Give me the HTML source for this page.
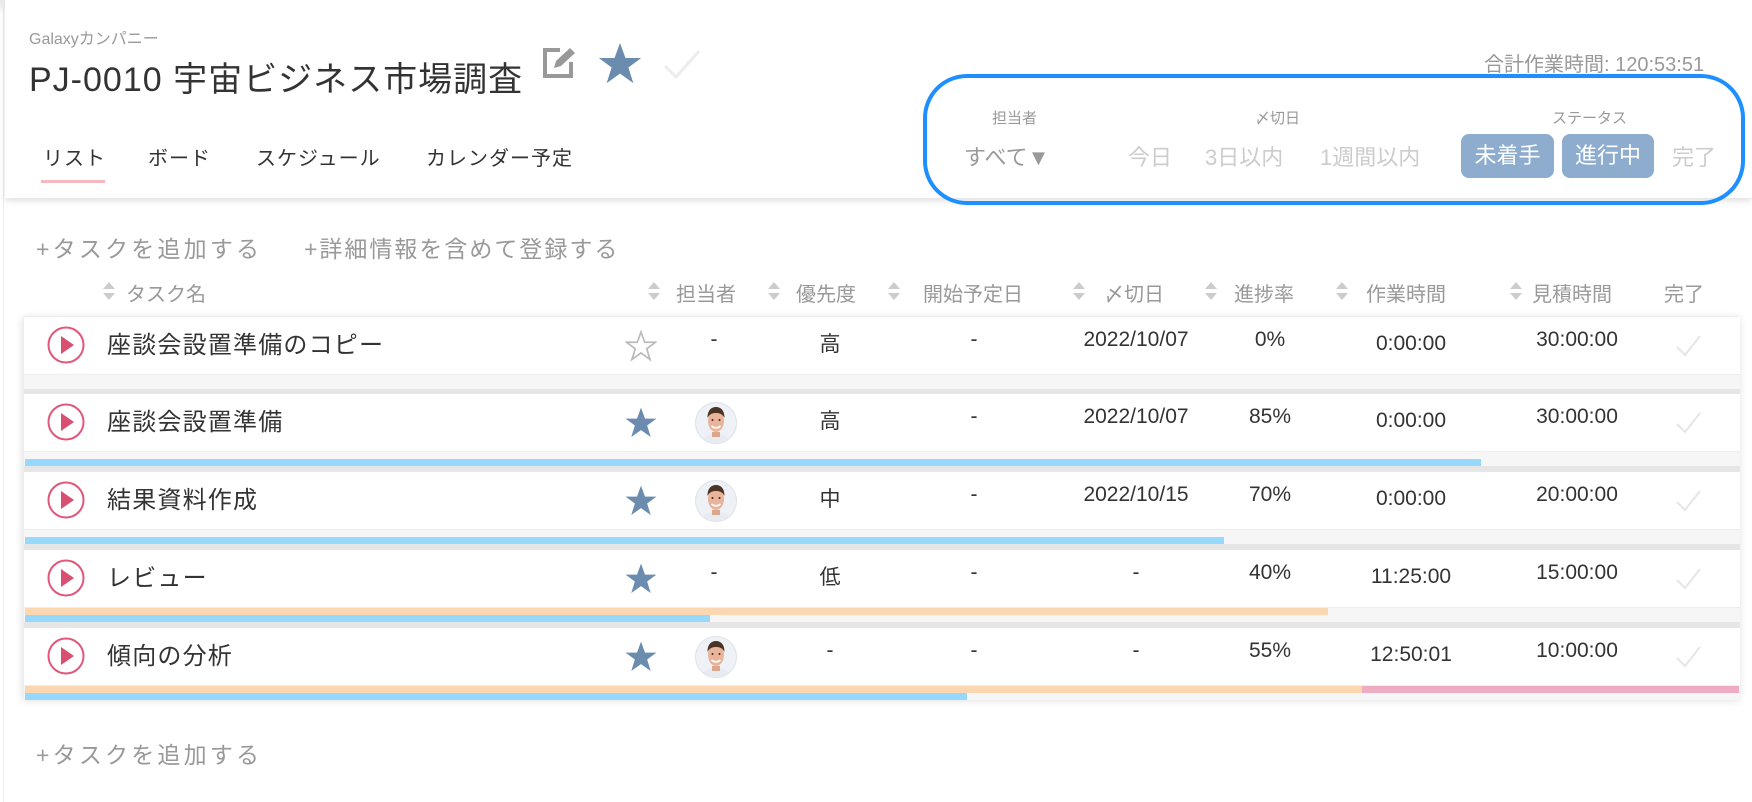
<!DOCTYPE html>
<html><head><meta charset="utf-8"><style>
*{margin:0;padding:0;box-sizing:border-box}
body{width:1752px;height:802px;background:#fff;font-family:"Liberation Sans","Noto Sans CJK JP",sans-serif;position:relative;overflow:hidden;color:#333}
.a{position:absolute;white-space:nowrap}
.hdr{position:absolute;left:5px;top:0;width:1747px;height:198px;background:#fff;box-shadow:0 3px 6px rgba(0,0,0,.12)}
.topsh{position:absolute;left:0;top:0;width:1752px;height:14px;background:linear-gradient(#e6e6e6,#fff)}
.tab{font-size:20px;color:#333;letter-spacing:1px;top:142px}
.ch{font-size:20px;color:#999;top:278px}
.sort{position:absolute;top:281px;width:12px;height:20px}
.card{position:absolute;left:23px;width:1716px;background:#fff}
.row{position:absolute;left:0;width:1716px;height:78px}
.body{position:absolute;left:0;top:0;width:100%;height:57px;background:#fff}
.bars{position:absolute;left:0;top:57px;width:100%;height:15px;background:#f6f6f6;border-top:1px solid #eee}
.sep{position:absolute;left:0;top:72px;width:100%;height:6px;background:#e6e6e6}
.c{position:absolute;top:11px;font-size:21px;color:#333;transform:translateX(-50%)}
.nm{position:absolute;left:83px;top:8px;font-size:24px;letter-spacing:1.2px;color:#333}
.play{position:absolute;left:23px;top:9px;width:38px;height:38px}
.st{position:absolute;left:601px;top:13px;width:32px;height:32px}
.av{position:absolute;left:671px;top:8px;width:42px;height:42px}
.ck{position:absolute;left:1650px;top:16px;width:28px;height:26px}
.bar{position:absolute;height:7px}
</style></head><body>
<div class="topsh"></div>
<div style="position:absolute;left:3px;top:0;width:1px;height:802px;background:#eee"></div>
<div class="hdr"></div>
<div class="a" style="left:29px;top:25px;font-size:16px;color:#999">Galaxyカンパニー</div>
<div class="a" style="left:29px;top:52px;font-size:34px;color:#333;letter-spacing:1px">PJ-0010 宇宙ビジネス市場調査</div>
<svg class="a" style="left:540px;top:46px" width="40" height="34" viewBox="0 0 40 34"><path d="M20 4H5v26h26V16" fill="none" stroke="#999" stroke-width="4"/><path d="M14 22l2-7 14-13 5 5-14 13z" fill="#999"/></svg>
<svg class="a" style="left:598px;top:43px" width="44" height="42" viewBox="0 0 24 23"><path d="M12 0l3 8.2h8.6l-7 5.2 2.7 8.6L12 16.8 4.7 22l2.7-8.6-7-5.2H9z" fill="#6b8cae"/></svg>
<svg class="a" style="left:662px;top:48px" width="40" height="32" viewBox="0 0 40 32"><path d="M3 18l11 11L37 3" fill="none" stroke="#ececec" stroke-width="3"/></svg>
<div class="a tab" style="left:43px">リスト</div>
<div class="a" style="left:41px;top:180px;width:64px;height:3px;background:#f6b8bf"></div>
<div class="a tab" style="left:148px">ボード</div>
<div class="a tab" style="left:256px">スケジュール</div>
<div class="a tab" style="left:426px">カレンダー予定</div>
<div class="a" style="left:1484px;top:48px;font-size:20px;color:#999">合計作業時間: 120:53:51</div>
<div class="a" style="left:923px;top:74px;width:822px;height:131px;border:4px solid #1e8fff;border-radius:44px"></div>
<div class="a" style="left:992px;top:107px;font-size:15px;color:#999">担当者</div>
<div class="a" style="left:1255px;top:107px;font-size:15px;color:#999">〆切日</div>
<div class="a" style="left:1552px;top:107px;font-size:15px;color:#999">ステータス</div>
<div class="a" style="left:964px;top:140px;font-size:22px;color:#999">すべて▼</div>
<div class="a" style="left:1128px;top:140px;font-size:22px;color:#ccc">今日</div>
<div class="a" style="left:1205px;top:140px;font-size:22px;color:#ccc">3日以内</div>
<div class="a" style="left:1320px;top:140px;font-size:22px;color:#ccc">1週間以内</div>
<div class="a" style="left:1461px;top:134px;width:93px;height:44px;background:#8eadce;border-radius:8px;color:#fff;font-size:22px;text-align:center;line-height:44px">未着手</div>
<div class="a" style="left:1562px;top:134px;width:92px;height:44px;background:#8eadce;border-radius:8px;color:#fff;font-size:22px;text-align:center;line-height:44px">進行中</div>
<div class="a" style="left:1672px;top:140px;font-size:22px;color:#ccc">完了</div>

<div class="a" style="left:36px;top:230px;font-size:23px;color:#999;letter-spacing:3.2px">+タスクを追加する</div>
<div class="a" style="left:304px;top:230px;font-size:23px;color:#999;letter-spacing:2px">+詳細情報を含めて登録する</div>

<svg class="sort" style="left:103px" viewBox="0 0 12 20"><path d="M6 1l6 7H0zM6 19l6-7H0z" fill="#ccc"/></svg><div class="a ch" style="left:126px">タスク名</div>
<svg class="sort" style="left:648px" viewBox="0 0 12 20"><path d="M6 1l6 7H0zM6 19l6-7H0z" fill="#ccc"/></svg><div class="a ch" style="left:676px">担当者</div>
<svg class="sort" style="left:768px" viewBox="0 0 12 20"><path d="M6 1l6 7H0zM6 19l6-7H0z" fill="#ccc"/></svg><div class="a ch" style="left:796px">優先度</div>
<svg class="sort" style="left:888px" viewBox="0 0 12 20"><path d="M6 1l6 7H0zM6 19l6-7H0z" fill="#ccc"/></svg><div class="a ch" style="left:923px">開始予定日</div>
<svg class="sort" style="left:1073px" viewBox="0 0 12 20"><path d="M6 1l6 7H0zM6 19l6-7H0z" fill="#ccc"/></svg><div class="a ch" style="left:1104px">〆切日</div>
<svg class="sort" style="left:1205px" viewBox="0 0 12 20"><path d="M6 1l6 7H0zM6 19l6-7H0z" fill="#ccc"/></svg><div class="a ch" style="left:1234px">進捗率</div>
<svg class="sort" style="left:1336px" viewBox="0 0 12 20"><path d="M6 1l6 7H0zM6 19l6-7H0z" fill="#ccc"/></svg><div class="a ch" style="left:1366px">作業時間</div>
<svg class="sort" style="left:1510px" viewBox="0 0 12 20"><path d="M6 1l6 7H0zM6 19l6-7H0z" fill="#ccc"/></svg><div class="a ch" style="left:1532px">見積時間</div>
<div class="a ch" style="left:1664px">完了</div>

<svg width="0" height="0" style="position:absolute"><defs>
<g id="pl"><circle cx="19" cy="19" r="17.5" fill="#fff" stroke="#e0577a" stroke-width="2"/><path d="M14 10l13 9-13 9z" fill="#d94f70"/></g>
<g id="sf"><path d="M12 0l3 8.2h8.6l-7 5.2 2.7 8.6L12 16.8 4.7 22l2.7-8.6-7-5.2H9z" fill="#6b8cae"/></g>
<g id="so"><path d="M12 1l2.8 7.7h8l-6.5 4.9 2.5 8L12 16.7l-6.8 4.9 2.5-8L1.2 8.7h8z" fill="none" stroke="#bbb" stroke-width="1.3"/></g>
<g id="avg"><clipPath id="cp"><circle cx="21" cy="21" r="20"/></clipPath><circle cx="21" cy="21" r="20.5" fill="#eef2f7" stroke="#dde3ea"/><g clip-path="url(#cp)"><path d="M6 42c2-8 8-10 15-10s13 2 15 10z" fill="#e8ecf2"/><path d="M17 30h8v5h-8z" fill="#dba88e"/><ellipse cx="21" cy="19" rx="8" ry="11" fill="#e9b49a"/><path d="M12.5 16c0-8 4-11 8.5-11s8.5 3 8.5 11c-2-4-5-5-8.5-5s-6.5 1-8.5 5z" fill="#4a3426"/><circle cx="17.5" cy="18" r="1" fill="#3a2a20"/><circle cx="24.5" cy="18" r="1" fill="#3a2a20"/><path d="M16.5 24c3 2.5 6 2.5 9 0" stroke="#fff" stroke-width="1.6" fill="none"/></g></g>
<g id="ckg"><path d="M3 14l8 8L26 3" fill="none" stroke="#e6e6e6" stroke-width="2"/></g>
</defs></svg>

<div class="card" style="top:316px;height:382px;box-shadow:0 2px 8px rgba(0,0,0,.15);border:1px solid #eee">
 <div class="row" style="top:0">
  <div class="body"></div><div class="bars"></div><div class="sep"></div>
  <svg class="play" viewBox="0 0 38 38"><use href="#pl"/></svg>
  <div class="nm">座談会設置準備のコピー</div>
  <svg class="st" viewBox="0 0 24 23"><use href="#so"/></svg>
  <div class="c" style="left:690px">-</div><div class="c" style="left:806px">高</div><div class="c" style="left:950px">-</div>
  <div class="c" style="left:1112px">2022/10/07</div><div class="c" style="left:1246px">0%</div><div class="c" style="left:1387px;top:15px">0:00:00</div><div class="c" style="left:1553px">30:00:00</div>
  <svg class="ck" viewBox="0 0 28 26"><use href="#ckg"/></svg>
 </div>
 <div class="row" style="top:77px">
  <div class="body"></div><div class="bars"><div class="bar" style="left:1px;top:7px;width:1456px;background:#97d9fc"></div></div><div class="sep"></div>
  <svg class="play" viewBox="0 0 38 38"><use href="#pl"/></svg>
  <div class="nm">座談会設置準備</div>
  <svg class="st" viewBox="0 0 24 23"><use href="#sf"/></svg>
  <svg class="av" viewBox="0 0 42 42"><use href="#avg"/></svg>
  <div class="c" style="left:806px">高</div><div class="c" style="left:950px">-</div>
  <div class="c" style="left:1112px">2022/10/07</div><div class="c" style="left:1246px">85%</div><div class="c" style="left:1387px;top:15px">0:00:00</div><div class="c" style="left:1553px">30:00:00</div>
  <svg class="ck" viewBox="0 0 28 26"><use href="#ckg"/></svg>
 </div>
 <div class="row" style="top:155px">
  <div class="body"></div><div class="bars"><div class="bar" style="left:1px;top:7px;width:1199px;background:#97d9fc"></div></div><div class="sep"></div>
  <svg class="play" viewBox="0 0 38 38"><use href="#pl"/></svg>
  <div class="nm">結果資料作成</div>
  <svg class="st" viewBox="0 0 24 23"><use href="#sf"/></svg>
  <svg class="av" viewBox="0 0 42 42"><use href="#avg"/></svg>
  <div class="c" style="left:806px">中</div><div class="c" style="left:950px">-</div>
  <div class="c" style="left:1112px">2022/10/15</div><div class="c" style="left:1246px">70%</div><div class="c" style="left:1387px;top:15px">0:00:00</div><div class="c" style="left:1553px">20:00:00</div>
  <svg class="ck" viewBox="0 0 28 26"><use href="#ckg"/></svg>
 </div>
 <div class="row" style="top:233px">
  <div class="body"></div><div class="bars"><div class="bar" style="left:1px;top:0;width:1303px;background:#fad7b0"></div><div class="bar" style="left:1px;top:7px;width:685px;background:#97d9fc"></div></div><div class="sep"></div>
  <svg class="play" viewBox="0 0 38 38"><use href="#pl"/></svg>
  <div class="nm">レビュー</div>
  <svg class="st" viewBox="0 0 24 23"><use href="#sf"/></svg>
  <div class="c" style="left:690px">-</div><div class="c" style="left:806px">低</div><div class="c" style="left:950px">-</div>
  <div class="c" style="left:1112px">-</div><div class="c" style="left:1246px">40%</div><div class="c" style="left:1387px;top:15px">11:25:00</div><div class="c" style="left:1553px">15:00:00</div>
  <svg class="ck" viewBox="0 0 28 26"><use href="#ckg"/></svg>
 </div>
 <div class="row" style="top:311px;height:71px">
  <div class="body"></div><div class="bars"><div class="bar" style="left:1px;top:0;width:1337px;background:#fad7b0"></div><div class="bar" style="left:1338px;top:0;width:377px;background:#eeacc2"></div><div class="bar" style="left:1px;top:7px;width:942px;background:#97d9fc"></div></div>
  <svg class="play" viewBox="0 0 38 38"><use href="#pl"/></svg>
  <div class="nm">傾向の分析</div>
  <svg class="st" viewBox="0 0 24 23"><use href="#sf"/></svg>
  <svg class="av" viewBox="0 0 42 42"><use href="#avg"/></svg>
  <div class="c" style="left:806px">-</div><div class="c" style="left:950px">-</div>
  <div class="c" style="left:1112px">-</div><div class="c" style="left:1246px">55%</div><div class="c" style="left:1387px;top:15px">12:50:01</div><div class="c" style="left:1553px">10:00:00</div>
  <svg class="ck" viewBox="0 0 28 26"><use href="#ckg"/></svg>
 </div>
</div>

<div class="a" style="left:36px;top:736px;font-size:23px;color:#999;letter-spacing:3.2px">+タスクを追加する</div>
</body></html>
